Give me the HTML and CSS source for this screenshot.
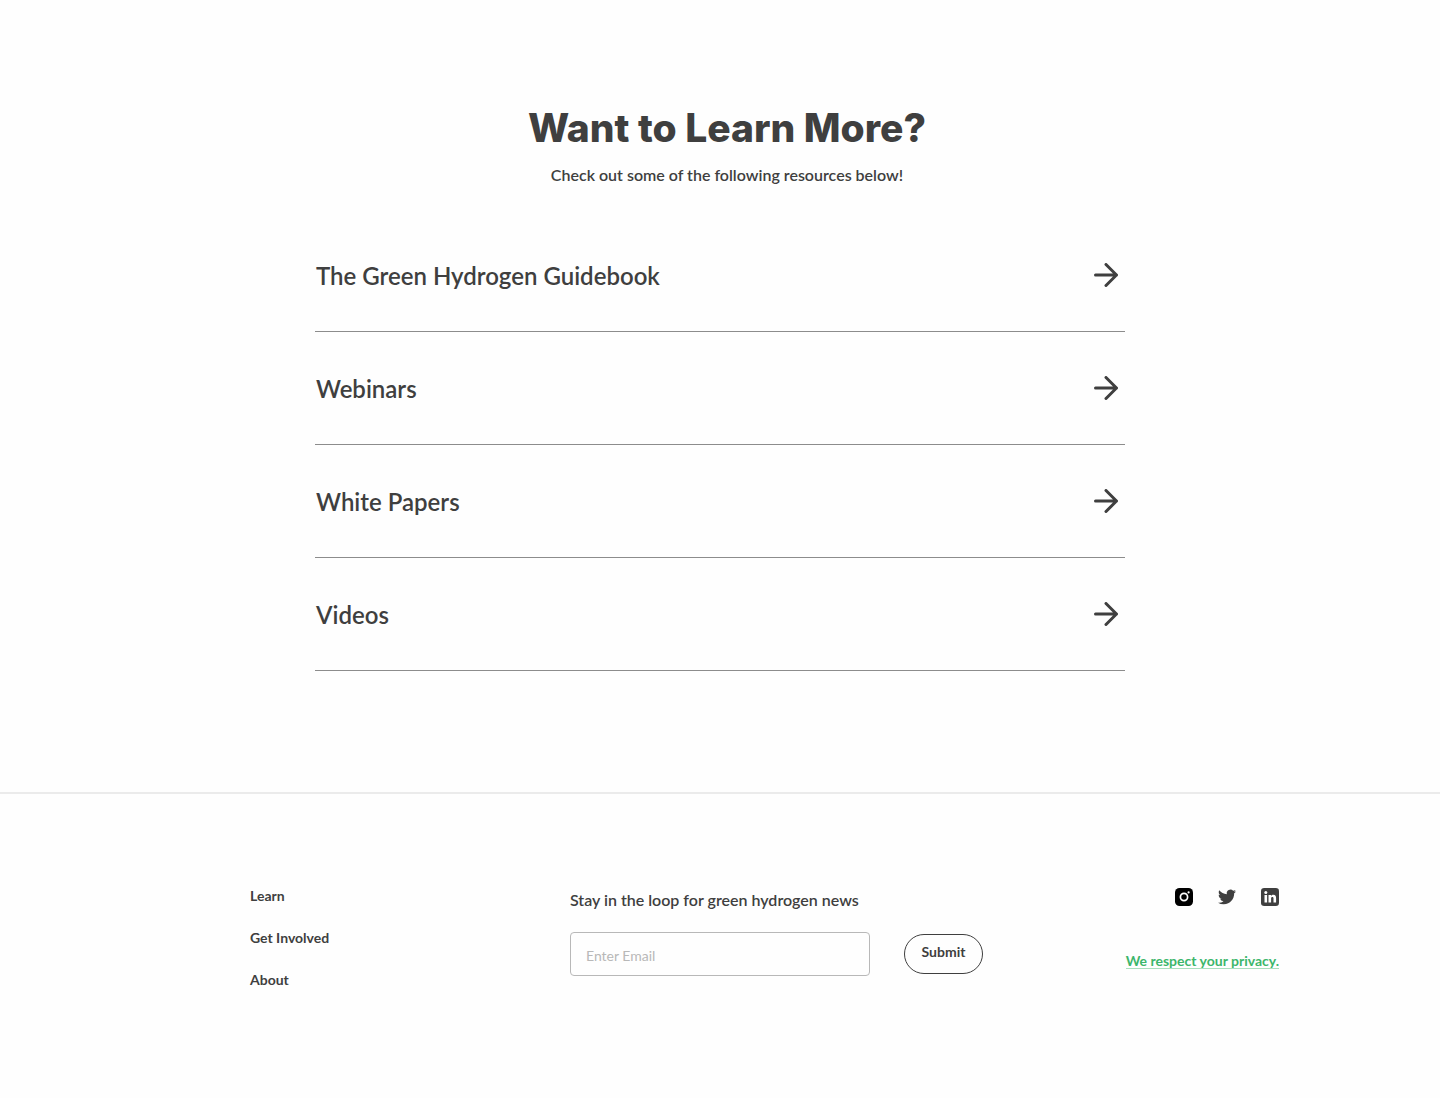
FILE: index.html
```html
<!DOCTYPE html>
<html lang="en">
<head>
    <meta charset="UTF-8">
    <meta name="viewport" content="width=device-width, initial-scale=1.0">
    <title>Green Hydrogen Resources</title>
    <link rel="stylesheet" href="styles.css">
</head>
<body>
    <main class="resources">
        <header class="intro">
            <h1>Want to Learn More?</h1>
            <p>Check out some of the following resources below!</p>
        </header>
        <ul class="resource-list">
            <li><a href="#guidebook">The Green Hydrogen Guidebook
                <svg class="arrow" viewBox="0 0 24 24"><path d="M1.5 12h21M12 1.5L22.5 12L12 22.5"/></svg></a></li>
            <li><a href="#webinars">Webinars
                <svg class="arrow" viewBox="0 0 24 24"><path d="M1.5 12h21M12 1.5L22.5 12L12 22.5"/></svg></a></li>
            <li><a href="#papers">White Papers
                <svg class="arrow" viewBox="0 0 24 24"><path d="M1.5 12h21M12 1.5L22.5 12L12 22.5"/></svg></a></li>
            <li><a href="#videos">Videos
                <svg class="arrow" viewBox="0 0 24 24"><path d="M1.5 12h21M12 1.5L22.5 12L12 22.5"/></svg></a></li>
        </ul>
    </main>
    <footer class="footer">
        <nav class="footer-nav">
            <a href="#learn">Learn</a>
            <a href="#involved">Get Involved</a>
            <a href="#about">About</a>
        </nav>
        <form class="signup">
            <label for="email">Stay in the loop for green hydrogen news</label>
            <div class="signup-row">
                <input type="email" id="email" placeholder="Enter Email">
                <button type="submit">Submit</button>
            </div>
        </form>
        <div class="footer-side">
            <div class="social">
                <a href="#instagram" aria-label="Instagram">
                    <svg viewBox="0 0 18 18">
                        <rect width="18" height="18" rx="4.5" fill="#000"/>
                        <circle cx="9" cy="9" r="3.6" fill="none" stroke="#fff" stroke-width="1.7"/>
                        <circle cx="13.6" cy="4.4" r="1.1" fill="#fff"/>
                    </svg>
                </a>
                <a href="#twitter" aria-label="Twitter">
                    <svg viewBox="0 0 24 24">
                        <path fill="#3f3f3f" d="M23.953 4.57a10 10 0 01-2.825.775 4.958 4.958 0 002.163-2.723c-.951.555-2.005.959-3.127 1.184a4.92 4.92 0 00-8.384 4.482C7.69 8.095 4.067 6.13 1.64 3.162a4.822 4.822 0 00-.666 2.475c0 1.71.87 3.213 2.188 4.096a4.904 4.904 0 01-2.228-.616v.06a4.923 4.923 0 003.946 4.827 4.996 4.996 0 01-2.212.085 4.936 4.936 0 004.604 3.417 9.867 9.867 0 01-6.102 2.105c-.39 0-.779-.023-1.17-.067a13.995 13.995 0 007.557 2.209c9.053 0 13.998-7.496 13.998-13.985 0-.21 0-.42-.015-.63A9.935 9.935 0 0024 4.59z"/>
                    </svg>
                </a>
                <a href="#linkedin" aria-label="LinkedIn">
                    <svg viewBox="0 0 18 18">
                        <rect width="18" height="18" rx="3.2" fill="#3f3f3f"/>
                        <circle cx="4.8" cy="4.5" r="1.5" fill="#fff"/>
                        <path fill="#fff" d="M3.5 7h2.6v7.5H3.5zM7.5 7H10v1.1c.5-.8 1.3-1.3 2.4-1.3 2.1 0 2.7 1.4 2.7 3.3v4.4h-2.6v-3.9c0-1-.2-1.7-1.1-1.7-1 0-1.3.7-1.3 1.7v3.9H7.5z"/>
                    </svg>
                </a>
            </div>
            <a class="privacy" href="#privacy">We respect your privacy.</a>
        </div>
    </footer>
</body>
</html>
```

FILE: styles.css
```css
* {
    box-sizing: border-box;
}
body {
    margin: 0;
    font-family: Lato, "Liberation Sans", sans-serif;
    color: #3f3f3f;
    background-color: #fefefe;
}
a {
    color: inherit;
    text-decoration: none;
}
.resources {
    max-width: 810px;
    margin: 0 auto;
    padding: 101px 0 121px;
}
.intro {
    padding-left: 14px;
    text-align: center;
}
.intro h1 {
    margin: 0;
    font-family: Inter, sans-serif;
    font-size: 39px;
    line-height: 54px;
    font-weight: 800;
}
.intro p {
    margin: 8px 0 0;
    font-size: 16px;
    line-height: 24px;
    font-weight: 600;
}
.resource-list {
    list-style: none;
    margin: 32px 0 0;
    padding: 0;
}
.resource-list a {
    display: flex;
    justify-content: space-between;
    align-items: center;
    height: 113px;
    padding: 0 7px 0 1px;
    border-bottom: 1px solid #8c8c8c;
    font-size: 24px;
    font-weight: 600;
}
.arrow {
    width: 24px;
    height: 24px;
    fill: none;
    stroke: #3f3f3f;
    stroke-width: 3;
    stroke-linecap: round;
    stroke-linejoin: round;
}
.footer {
    display: grid;
    grid-template-columns: 320px 1fr auto;
    padding: 93px 161px 109px 250px;
    border-top: 2px solid #ebebeb;
    font-size: 14px;
    line-height: 18px;
    font-weight: 700;
}
.footer-nav {
    display: flex;
    flex-direction: column;
    gap: 24px;
}
.signup label {
    display: block;
    padding-top: 1px;
    font-size: 16px;
    line-height: 24px;
    font-weight: 600;
}
.signup-row {
    display: flex;
    align-items: center;
    gap: 34px;
    margin-top: 20px;
}
.signup input {
    width: 300px;
    height: 44px;
    padding: 3px 15px 0;
    border: 1px solid #b8b8b8;
    border-radius: 4px;
    background: none;
    font: inherit;
    font-weight: 400;
}
.signup input::placeholder {
    color: #b8b8b8;
}
.signup button {
    width: 79px;
    height: 40px;
    padding: 0 0 4px;
    border: 1px solid #3f3f3f;
    border-radius: 20px;
    background: none;
    color: inherit;
    font: inherit;
    cursor: pointer;
}
.footer-side {
    display: flex;
    flex-direction: column;
    align-items: flex-end;
    gap: 48px;
    padding-top: 1px;
}
.social {
    display: flex;
    gap: 25px;
}
.social svg {
    display: block;
    width: 18px;
    height: 18px;
}
.privacy {
    line-height: 14px;
    color: #3cb66b;
    border-bottom: 1px solid #a8dfbd;
}
```
